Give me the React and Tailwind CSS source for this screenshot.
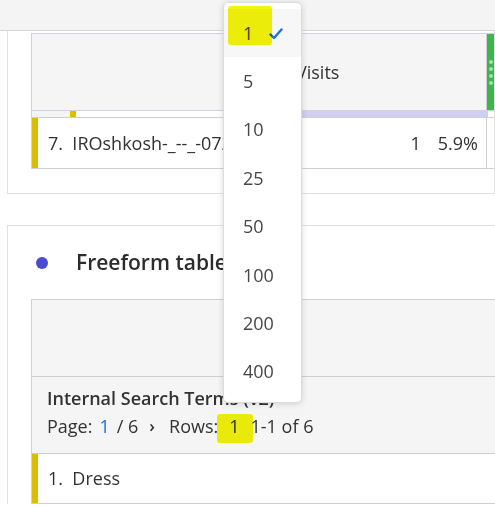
const FONT = { fontFamily: '"Open Sans", "Noto Sans", Arial, sans-serif' };

const ROW_OPTIONS = ["1", "5", "10", "25", "50", "100", "200", "400"];

function Highlight({ className }) {
  return (
    <div
      className={`pointer-events-none absolute rounded-[3px] bg-[#f4f40a] mix-blend-multiply blur-[0.6px] ${className}`}
    />
  );
}

function RowsDropdown() {
  return (
    <div className="absolute left-[223px] top-[2px] w-[79px] rounded-[5px] border border-[#dcdcdc] bg-white pb-[6px] pt-[6px] shadow-[0_1px_6px_rgba(0,0,0,0.15)]">
      {ROW_OPTIONS.map((opt, i) => (
        <div
          key={opt}
          className={`flex h-[48.4px] items-center pl-[19px] text-[18px] text-[#464646] ${
            i === 0 ? "bg-[#f7f7f7]" : ""
          }`}
        >
          <span>{opt}</span>
          {i === 0 && (
            <svg
              viewBox="0 0 14 12"
              className="ml-[16px] mt-[2px] h-[12px] w-[14px]"
              fill="none"
              stroke="#1473e6"
              strokeWidth="2.4"
              strokeLinecap="round"
              strokeLinejoin="round"
            >
              <path d="M1.5 6.5 L5 10 L12.5 1.5" />
            </svg>
          )}
        </div>
      ))}
    </div>
  );
}

function TopPanel() {
  return (
    <div className="ml-[7px] border-x border-b border-[#e1e1e1] pb-[24px] pl-[23px] pt-[2px]">
      <div className="border-l border-[#d0d0d0]">
        {/* header */}
        <div className="flex h-[78px] border-y border-[#d3d3de] bg-[#f5f5f5]">
          <div className="flex flex-1 items-center pl-[264px] text-[18px] text-[#323232]">
            Visits
          </div>
          <div className="w-px bg-[#d0d0d0]" />
          <div className="flex w-[7px] flex-col items-center justify-center gap-[3px] bg-[#3db44f]">
            <span className="h-[4px] w-[4px] rounded-full bg-[#a6deaf]" />
            <span className="h-[4px] w-[4px] rounded-full bg-[#a6deaf]" />
            <span className="h-[4px] w-[4px] rounded-full bg-[#a6deaf]" />
            <span className="h-[4px] w-[4px] rounded-full bg-[#a6deaf]" />
          </div>
        </div>
        {/* bar strip */}
        <div className="flex h-[7px] border-b border-[#d0d0d0]">
          <div className="w-[38px] bg-[#f4f4f4]" />
          <div className="w-[6px] bg-[#dcbd00]" />
          <div className="w-[215px] bg-white" />
          <div className="w-[197px] bg-[#cfcff2]" />
          <div className="flex-1 bg-white" />
        </div>
        {/* data row */}
        <div className="flex h-[51px] border-b border-[#d0d0d0]">
          <div className="w-[6px] bg-[#dcbd00]" />
          <div className="flex flex-1 items-center pl-[10px] text-[18px] text-[#323232]">
            <span className="whitespace-nowrap">7.&nbsp; IROshkosh-_--_-0721</span>
            <span className="ml-auto">1</span>
            <span className="ml-[17px] pr-[8px]">5.9%</span>
          </div>
          <div className="w-px bg-[#d0d0d0]" />
          <div className="w-[7px]" />
        </div>
      </div>
    </div>
  );
}

function BottomPanel() {
  return (
    <div className="ml-[7px] mt-[31px] border-l border-t border-[#e1e1e1] pl-[23px]">
      <div className="flex h-[73px] items-center">
        <span className="ml-[5px] h-[12px] w-[12px] rounded-full bg-[#4b4bd2]" />
        <span className="ml-[28px] whitespace-nowrap text-[21px] font-semibold text-[#2c2c2c]">
          Freeform table
        </span>
      </div>
      <div className="border-l border-[#d0d0d0]">
        <div className="h-[78px] border-y border-[#cfcfcf] bg-[#f5f5f5]" />
        <div className="relative h-[77px] border-b border-[#cfcfcf] bg-[#f5f5f5] pl-[15px] pt-[8px] text-[#323232]">
          <div className="text-[18px] font-semibold leading-[26px]">
            Internal Search Terms (v2)
          </div>
          <div className="flex items-center whitespace-nowrap text-[18px] leading-[30px]">
            <span>Page:</span>
            <span className="ml-[7px] text-[#1473e6]">1</span>
            <span className="ml-[7px]">/ 6</span>
            <span className="ml-[11px] text-[17px] font-semibold">›</span>
            <span className="ml-[14px]">Rows:</span>
            <span className="ml-[11px]">1</span>
            <span className="ml-[11px]">1-1 of 6</span>
          </div>
          <Highlight className="left-[185px] top-[37px] h-[29px] w-[36px]" />
        </div>
        <div className="flex h-[50px] border-b border-[#cfcfcf]">
          <div className="w-[6px] bg-[#dcbd00]" />
          <div className="flex items-center pl-[10px] text-[18px] text-[#323232]">
            1.&nbsp; Dress
          </div>
        </div>
      </div>
    </div>
  );
}

export default function App() {
  return (
    <div
      className="relative h-[507px] w-[495px] overflow-hidden bg-white"
      style={FONT}
    >
      <div className="h-[31px] border-b border-[#d6d6d6] bg-[#f4f4f4]" />
      <TopPanel />
      <BottomPanel />
      <RowsDropdown />
      <Highlight className="left-[228px] top-[6px] h-[39px] w-[44px]" />
    </div>
  );
}
